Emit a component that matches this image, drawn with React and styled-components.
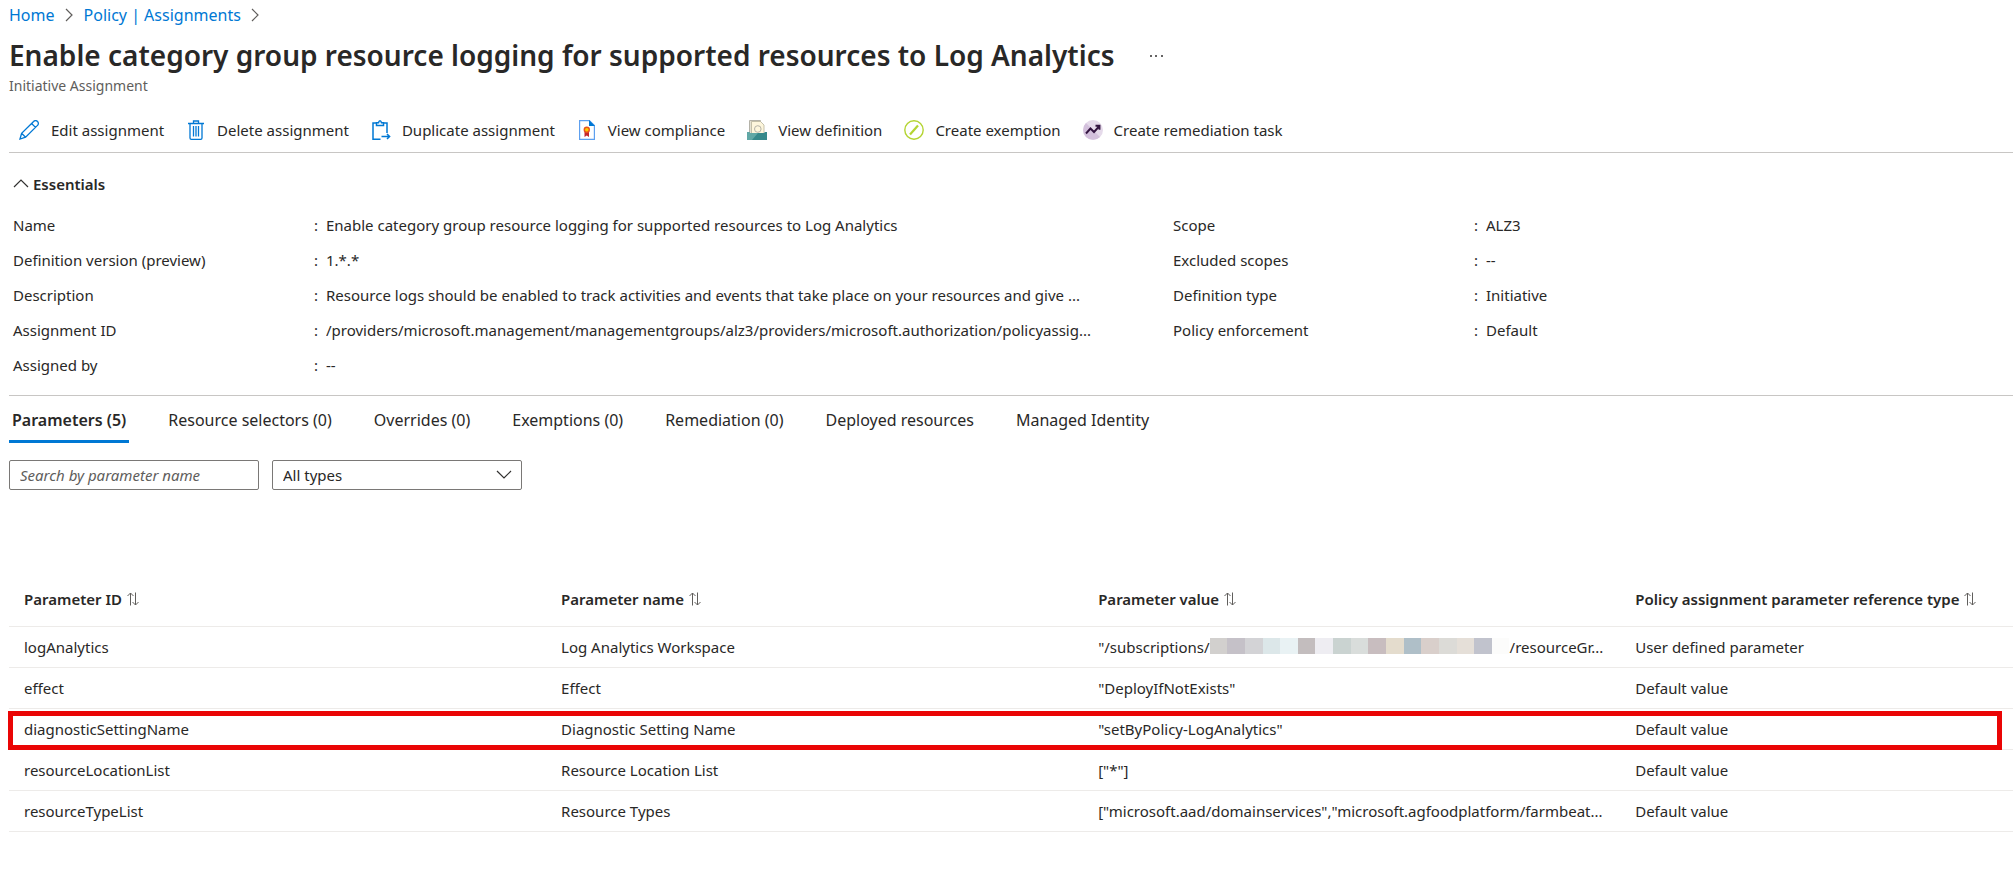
import React from "react";
import styled, { createGlobalStyle, css } from "styled-components";

const Global = createGlobalStyle`
  * { box-sizing: border-box; }
  body { margin: 0; background: #fff; color: #292827; font: 15px/20px "Noto Sans", "Open Sans", sans-serif; }
  button, input, select { font: inherit; color: inherit; }
`;

const Page = styled.main`
  padding: 0 0 52px 9px;
  min-height: 100vh;
`;

const Breadcrumb = styled.nav`
  display: flex;
  align-items: center;
  height: 30px;
  gap: 10px;
  font-size: 16px;
  a { color: #0078d4; text-decoration: none; }
`;

const TitleRow = styled.div`
  display: flex;
  align-items: center;
  height: 50px;
  gap: 32px;
`;

const Title = styled.h1`
  margin: 0;
  font-size: 28px;
  line-height: 40px;
  font-weight: 600;
  white-space: nowrap;
`;

const PlainButton = styled.button`
  display: inline-flex;
  align-items: center;
  padding: 0;
  border: 0;
  background: none;
  white-space: nowrap;
  cursor: pointer;
`;

const Subtitle = styled.p`
  margin: 0;
  color: #605e5c;
  font-size: 14px;
  line-height: 12px;
`;

const Toolbar = styled.div`
  display: flex;
  align-items: center;
  height: 61px;
  padding: 16px 0 0 10px;
  gap: 22px;
  border-bottom: 1px solid #c8c6c4;
`;

const ToolButton = styled(PlainButton)`
  gap: 11px;
`;

const Essentials = styled.section`
  padding: 19px 0 12px 4px;
  border-bottom: 1px solid #c8c6c4;
`;

const EssentialsToggle = styled(PlainButton)`
  height: 22px;
  gap: 4px;
  font-size: 15px;
  font-weight: 600;
`;

const Columns = styled.div`
  display: grid;
  grid-template-columns: 1160px minmax(0, 1fr);
  padding-top: 13px;
`;

const Facts = styled.dl`
  margin: 0;
`;

const Fact = styled.div`
  display: grid;
  grid-template-columns: 301px 12px minmax(0, 784px);
  height: 35px;
  align-items: center;
  dd { margin: 0; overflow: hidden; white-space: nowrap; text-overflow: ellipsis; }
`;

const Tabs = styled.div`
  display: flex;
  gap: 36px;
  height: 47px;
  font-size: 16px;
`;

const Tab = styled(PlainButton)`
  padding: 4px 3px 0;
  border-bottom: 3px solid transparent;
  ${(p) => p.$active && css`
    font-weight: 600;
    border-color: #0078d4;
  `}
`;

const Filters = styled.div`
  display: flex;
  gap: 13px;
  padding-top: 17px;
`;

const field = css`
  width: 250px;
  height: 30px;
  border: 1px solid #7a7876;
  border-radius: 2px;
  background: #fff;
  padding: 0 10px;
`;

const Search = styled.input`
  ${field}
  &::placeholder { color: #605e5c; font-style: italic; opacity: 1; }
`;

const SelectWrap = styled.label`
  display: grid;
  align-items: center;
  > * { grid-area: 1 / 1; }
  svg { justify-self: end; margin-right: 10px; pointer-events: none; }
`;

const Select = styled.select`
  ${field}
  appearance: none;
`;

const Table = styled.table`
  width: 100%;
  margin-top: 83px;
  table-layout: fixed;
  border-collapse: collapse;
  th, td {
    padding: 0 16px 0 15px;
    border-bottom: 1px solid #edebe9;
    text-align: left;
    font-weight: 400;
    overflow: hidden;
    white-space: nowrap;
    text-overflow: ellipsis;
  }
  th { height: 54px; }
  td { height: 41px; }
`;

const Col = styled.col`
  width: ${(p) => p.$w};
`;

const SortButton = styled(PlainButton)`
  gap: 4px;
  font-size: 15px;
  font-weight: 600;
`;

const Row = styled.tr`
  ${(p) => p.$marked && css`
    position: relative;
    td:first-child::after {
      content: "";
      position: absolute;
      inset: 2px 11px 0 -1px;
      border: 5px solid #ea0505;
      pointer-events: none;
    }
  `}
`;

const Redacted = styled.span`
  display: inline-flex;
  width: 300px;
  height: 16px;
  vertical-align: -1px;
`;

const Swatch = styled.i`
  flex: 1;
  background: ${(p) => p.$c};
`;

const Chevron = ({ d, w, h, color = "#323130" }) => (
  <svg width={w} height={h} fill="none" stroke={color} strokeWidth="1.2" aria-hidden="true"><path d={d} /></svg>
);
const Crumb = () => <Chevron d="M1 1l6 6-6 6" w={9} h={14} color="#605e5c" />;

const Sort = () => (
  <svg width="14" height="14" viewBox="0 0 14 14" fill="none" stroke="#605e5c" aria-hidden="true">
    <path d="M4.500 13.500V1M1.500 4l3-3 3 3M9.500 .5V13M6.500 10l3 3 3-3" />
  </svg>
);

const PencilIcon = () => (
  <svg width="21" height="20" viewBox="0 0 21 20" fill="none" stroke="#0078d4" strokeWidth="1.300" aria-hidden="true">
    <path d="M1 19l1.600-5.700L14.600 1.500a2.600 2.600 0 0 1 3.900 0 2.600 2.600 0 0 1 0 3.900L6.600 17.200zM2.600 13.300l4 3.900M12.600 3.500l3.900 3.900" />
  </svg>
);
const TrashIcon = () => (
  <svg width="20" height="20" viewBox="0 0 20 20" fill="none" stroke="#0078d4" strokeWidth="1.300" aria-hidden="true">
    <path d="M4 3.500V18q0 1.300 1.300 1.300h9.400Q16 19.300 16 18V3.500" />
    <path d="M2 3.500h16M7.500 3.500V1h5v2.500M7.500 6v10.500M10 6v10.500M12.500 6v10.500" />
  </svg>
);
const CopyIcon = () => (
  <svg width="20" height="20" viewBox="0 0 20 20" fill="none" stroke="#0078d4" strokeWidth="1.500" aria-hidden="true">
    <path d="M9.500 19.200H2V3h3.500M12.500 3H16v10M5.500 5.500V2.800h2Q8 .8 9 .8t1.500 2h2v2.700zM10.500 16.500h8M16 14l2.600 2.500L16 19" />
  </svg>
);
const ComplianceIcon = () => (
  <svg width="20" height="20" viewBox="0 0 20 20" aria-hidden="true">
    <path d="M2.600.6h9.800l5 5v13.800H2.600z" fill="#fff" stroke="#5ea0ef" strokeWidth="1.200" />
    <path d="M12 0l6 6h-6z" fill="#0078d4" />
    <path d="M7.500 10.500h4.500V17l-2.200-1.500L7.500 17z" fill="#c4262e" />
    <circle cx="9.800" cy="9.800" r="3.200" fill="#e8541c" /><circle cx="9.800" cy="9.800" r="1.800" fill="#ffca00" />
  </svg>
);
const DefinitionIcon = () => (
  <svg width="20" height="20" viewBox="0 0 20 20" aria-hidden="true">
    <path d="M2.500.5h11v13h-11z" fill="#e4e1d2" stroke="#b4b2a8" />
    <path d="M4.500 1.500h9l3.500 3.500V14H4.500z" fill="#fdf6dc" stroke="#b8b49c" strokeWidth=".8" />
    <circle cx="10.800" cy="9" r="3.300" fill="none" stroke="#b4b2a8" />
    <path d="M0 12h2.500v1h15v-1H20v8H0z" fill="#37898b" /><path d="M0 12h2.500v1H11l-6 7H0z" fill="#61a8a6" />
  </svg>
);
const ExemptionIcon = () => (
  <svg width="20" height="20" viewBox="0 0 20 20" fill="none" stroke="#b4d432" aria-hidden="true">
    <circle cx="10" cy="10" r="9.200" strokeWidth="1.400" /><path d="M6 14.500L14 5.500" strokeWidth="2.200" />
  </svg>
);
const RemediationIcon = () => (
  <svg width="20" height="20" viewBox="0 0 20 20" aria-hidden="true">
    <circle cx="10" cy="10" r="10" fill="#e5daea" /><path d="M3 17A10 10 0 0 1 3 3l14 14a10 10 0 0 1-14 0z" fill="#d3c0dc" />
    <path d="M3 13.500l4.500-5 3.500 3.500 5-5.500M12.500 5.700h4v4" fill="none" stroke="#32133f" strokeWidth="1.900" />
  </svg>
);

const actions = [
  ["Edit assignment", PencilIcon], ["Delete assignment", TrashIcon], ["Duplicate assignment", CopyIcon],
  ["View compliance", ComplianceIcon], ["View definition", DefinitionIcon],
  ["Create exemption", ExemptionIcon], ["Create remediation task", RemediationIcon],
];

const left = [
  ["Name", "Enable category group resource logging for supported resources to Log Analytics"],
  ["Definition version (preview)", "1.*.*"],
  ["Description", "Resource logs should be enabled to track activities and events that take place on your resources and give ..."],
  ["Assignment ID", "/providers/microsoft.management/managementgroups/alz3/providers/microsoft.authorization/policyassig..."],
  ["Assigned by", "--"],
];
const right = [["Scope", "ALZ3"], ["Excluded scopes", "--"], ["Definition type", "Initiative"], ["Policy enforcement", "Default"]];

const tabs = ["Parameters (5)", "Resource selectors (0)", "Overrides (0)", "Exemptions (0)", "Remediation (0)", "Deployed resources", "Managed Identity"];

const swatches = ["#d2d0ce", "#c5c1c8", "#d3d3d6", "#dce7e9", "#e9f2f4", "#c3bdbe", "#eeedf2", "#cad3d1", "#d9dddb", "#c8bdbf", "#e4dccd", "#afbfc8", "#d9cfcb", "#dcdbd7", "#e5dfd8", "#c1c3cd", "#fcfcfb"];

const headers = ["Parameter ID", "Parameter name", "Parameter value", "Policy assignment parameter reference type"];
const rows = [
  ["logAnalytics", "Log Analytics Workspace", <>"/subscriptions/<Redacted>{swatches.map((c) => <Swatch key={c} $c={c} />)}</Redacted>/resourceGr...</>, "User defined parameter"],
  ["effect", "Effect", '"DeployIfNotExists"', "Default value"],
  ["diagnosticSettingName", "Diagnostic Setting Name", '"setByPolicy-LogAnalytics"', "Default value"],
  ["resourceLocationList", "Resource Location List", '["*"]', "Default value"],
  ["resourceTypeList", "Resource Types", '["microsoft.aad/domainservices","microsoft.agfoodplatform/farmbeat...', "Default value"],
];

const FactList = ({ items }) => (
  <Facts>
    {items.map(([k, v]) => <Fact key={k}><dt>{k}</dt><span>:</span><dd>{v}</dd></Fact>)}
  </Facts>
);

export default function App() {
  return (
    <Page>
      <Global />
      <Breadcrumb aria-label="Breadcrumb">
        <a href="#home">Home</a><Crumb /><a href="#assignments">Policy | Assignments</a><Crumb />
      </Breadcrumb>
      <TitleRow>
        <Title>Enable category group resource logging for supported resources to Log Analytics</Title>
        <PlainButton aria-label="More">
          <svg width="18" height="4" fill="#323130" aria-hidden="true"><circle cx="4" cy="3" r="1" /><circle cx="9" cy="3" r="1" /><circle cx="15" cy="3" r="1" /></svg>
        </PlainButton>
      </TitleRow>
      <Subtitle>Initiative Assignment</Subtitle>
      <Toolbar>
        {actions.map(([t, Icon]) => <ToolButton key={t}><Icon />{t}</ToolButton>)}
      </Toolbar>
      <Essentials>
        <EssentialsToggle aria-expanded="true"><Chevron d="M1 8l7-7 7 7" w={16} h={9} />Essentials</EssentialsToggle>
        <Columns><FactList items={left} /><FactList items={right} /></Columns>
      </Essentials>
      <Tabs role="tablist">
        {tabs.map((t, i) => <Tab key={t} role="tab" aria-selected={i === 0} $active={i === 0}>{t}</Tab>)}
      </Tabs>
      <Filters>
        <Search aria-label="Search by parameter name" placeholder="Search by parameter name" />
        <SelectWrap>
          <Select aria-label="Type"><option>All types</option></Select>
          <Chevron d="M1 1l7 7 7-7" w={16} h={9} />
        </SelectWrap>
      </Filters>
      <Table>
        <colgroup><Col $w="26.8%" /><Col $w="26.8%" /><Col $w="26.8%" /><Col $w="19.6%" /></colgroup>
        <thead><tr>{headers.map((h) => <th key={h} scope="col"><SortButton>{h}<Sort /></SortButton></th>)}</tr></thead>
        <tbody>
          {rows.map((r) => <Row key={r[0]} $marked={r[0] === "diagnosticSettingName"}>{r.map((c, i) => <td key={i}>{c}</td>)}</Row>)}
        </tbody>
      </Table>
    </Page>
  );
}
